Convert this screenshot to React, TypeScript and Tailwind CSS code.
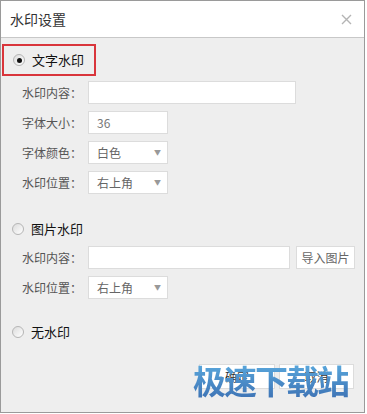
import React from 'react';

const FONT = { fontFamily: '"Microsoft YaHei", "Noto Sans CJK SC", "Noto Sans", sans-serif' };

function Radio({ checked, label }: { checked?: boolean; label: string }) {
  return (
    <div className="flex h-[20px] items-center gap-[7px]">
      <span className="flex h-[12px] w-[12px] items-center justify-center rounded-full border border-[#b5b5b5] bg-gradient-to-br from-[#dcdcdc] to-white">
        {checked && <span className="h-[5px] w-[5px] rounded-full bg-[#111]" />}
      </span>
      <span className="text-[13px] text-[#111]">{label}</span>
    </div>
  );
}

function Row({ label, children }: { label: string; children: React.ReactNode }) {
  return (
    <div className="flex h-[23px] items-center">
      <span className="ml-[21px] w-[66px] shrink-0 text-[12px] whitespace-nowrap text-[#555]">{label}</span>
      {children}
    </div>
  );
}

function Select({ value }: { value: string }) {
  return (
    <div className="flex h-[23px] w-[80px] items-center justify-between border border-[#dcdcdc] bg-white pl-[8px] pr-[6px] text-[12px] text-[#666]">
      <span>{value}</span>
      <span className="text-[7px] text-[#999]">▼</span>
    </div>
  );
}

export default function App() {
  return (
    <div className="h-[414px] w-[367px] overflow-hidden bg-white" style={FONT}>
      <div className="relative flex h-[413px] w-[365px] flex-col border border-[#9a9a9a]">
        {/* title bar */}
        <div className="flex h-[37px] shrink-0 items-center justify-between border-b border-[#c8c8c8] bg-white pl-[9px] pr-[12px]">
          <span className="text-[14px] text-[#333]">水印设置</span>
          <svg width="11" height="11" viewBox="0 0 11 11" className="mt-[1px]">
            <path d="M1 1L10 10M10 1L1 10" stroke="#b4b4b4" strokeWidth="1.4" />
          </svg>
        </div>

        <div className="flex flex-1 flex-col bg-[#eeeeee]">
          {/* text watermark */}
          <div className="ml-[1px] mt-[6px] flex h-[32px] w-[94px] items-center border-2 border-[#d9353b] pl-[9px]">
            <Radio checked label="文字水印" />
          </div>
          <div className="mt-[5px] flex flex-col gap-[7px]">
            <Row label="水印内容：">
              <div className="h-[23px] w-[208px] border border-[#dcdcdc] bg-white" />
            </Row>
            <Row label="字体大小：">
              <div className="flex h-[23px] w-[80px] items-center border border-[#dcdcdc] bg-white pl-[8px] text-[12px] text-[#777]">36</div>
            </Row>
            <Row label="字体颜色：">
              <Select value="白色" />
            </Row>
            <Row label="水印位置：">
              <Select value="右上角" />
            </Row>
          </div>

          {/* image watermark */}
          <div className="ml-[11px] mt-[25px]">
            <Radio label="图片水印" />
          </div>
          <div className="mt-[7px] flex flex-col gap-[7px]">
            <Row label="水印内容：">
              <div className="h-[23px] w-[202px] border border-[#dcdcdc] bg-white" />
              <div className="ml-[6px] flex h-[23px] w-[59px] items-center justify-center border border-[#dcdcdc] bg-white text-[12px] text-[#666]">导入图片</div>
            </Row>
            <Row label="水印位置：">
              <Select value="右上角" />
            </Row>
          </div>

          {/* none */}
          <div className="ml-[11px] mt-[23px]">
            <Radio label="无水印" />
          </div>

          {/* buttons */}
          <div className="mt-[22px] flex justify-end gap-[4px] pr-[10px]">
            <div className="flex h-[25px] w-[76px] items-center justify-center border border-[#dcdcdc] bg-white text-[12px] text-[#333]">确定</div>
            <div className="flex h-[25px] w-[75px] items-center justify-center border border-[#dcdcdc] bg-white text-[12px] text-[#333]">取消</div>
          </div>
        </div>

        {/* site watermark overlay */}
        <div className="pointer-events-none absolute left-[192px] top-[356px] bg-gradient-to-b from-[#5fb2e4] to-[#3b6db0] bg-clip-text text-[33px] font-bold leading-[46px] tracking-[-2px] text-transparent">
          极速下载站
        </div>
      </div>
    </div>
  );
}
